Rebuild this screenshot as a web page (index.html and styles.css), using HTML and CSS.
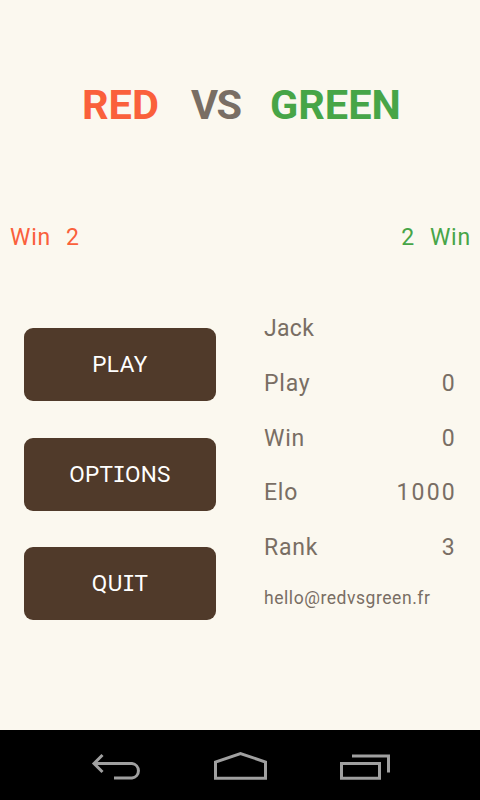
FILE: index.html
```html
<!DOCTYPE html>
<html lang="en">
<head>
<meta charset="utf-8">
<title>Red vs Green</title>
<link rel="stylesheet" href="styles.css">
</head>
<body>
<main class="game">
  <h1 class="title"><span class="red t-red">RED</span><span class="t-vs">VS</span><span class="green t-green">GREEN</span></h1>
  <div class="scores"><div class="red score-left"><span>Win</span><span>2</span></div><div class="green score-right"><span>2</span><span>Win</span></div></div>
  <div class="panel">
    <nav class="menu">
      <button class="btn play">PLAY</button>
      <button class="btn options"><span>OPT<i>I</i>ONS</span></button>
      <button class="btn quit"><span>QU<i>I</i>T</span></button>
    </nav>
    <section class="stats">
      <div class="row"><span class="jack">Jack</span></div>
      <div class="row"><span class="played">Play</span><b>0</b></div>
      <div class="row"><span class="win">Win</span><b>0</b></div>
      <div class="row"><span class="elo">Elo</span><b>1000</b></div>
      <div class="row"><span class="rank">Rank</span><b>3</b></div>
      <div class="mail">hello@redvsgreen.fr</div>
    </section>
  </div>
</main>
<footer class="navbar">
  <svg width="480" height="70" viewBox="0 0 480 70" fill="none" stroke="#a0a0a0" stroke-width="3">
    <path d="M94 33.500H132A7.300 7.300 0 0 1 132 48H114M102.500 25L94 33.500L102.500 42"/>
    <path d="M215.500 48.300V32L240.500 23.500L265.500 32V48.300Z"/>
    <path d="M341.500 33.500H379.500V48.300H341.500ZM352 26H388.500V42.500"/>
  </svg>
</footer>
</body>
</html>
```
FILE: styles.css
```css
* { box-sizing: border-box; }
body {
  margin: 0;
  width: 480px;
  height: 800px;
  display: flex;
  flex-direction: column;
  overflow: hidden;
  background: #fbf8ef;
  color: #796e64;
  font: 23px/30px Roboto, sans-serif;
  letter-spacing: 0.800px;
}
.game { flex: 1; }
.red { color: #fa603b; }
.green { color: #47a547; }
.title {
  display: flex;
  height: 60px;
  margin: 75px 0 0 82px;
  font-size: 41.500px;
  line-height: 60px;
  font-weight: 700;
  letter-spacing: 0;
}
.t-red { width: 109px; }
.t-vs { width: 79px; letter-spacing: -1.500px; }
.t-green { letter-spacing: 0; }
.scores {
  display: flex;
  justify-content: space-between;
  padding: 0 9px 0 10px;
  margin-top: 88px;
}
.scores > div { display: flex; gap: 15px; }
.panel { display: flex; padding: 0 24px; margin-top: 60px; }
.menu { width: 192px; margin-top: 15px; }
.btn {
  display: block;
  width: 192px;
  height: 73px;
  margin: 0 0 36.500px;
  padding: 0;
  border: 0;
  border-radius: 9px;
  background: #503a2a;
  color: #fff;
  font: 22.500px/73px Roboto, sans-serif;
  letter-spacing: 0.500px;
}
.btn i { font: 22px/1 "DejaVu Sans Mono", monospace; letter-spacing: -0.800px; margin-left: -0.800px; }
.options { letter-spacing: 0.300px; }
.stats { width: 192px; margin-left: 48px; }
.row {
  display: flex;
  justify-content: space-between;
  height: 54.750px;
  line-height: 32px;
}
.jack { letter-spacing: 0.300px; }
.row b { font-weight: 400; letter-spacing: 2.200px; margin-right: -1px; }
.mail { font-size: 17.500px; line-height: 22px; letter-spacing: 0.550px; }
.navbar { height: 70px; background: #000; }
.navbar svg { display: block; }
```
